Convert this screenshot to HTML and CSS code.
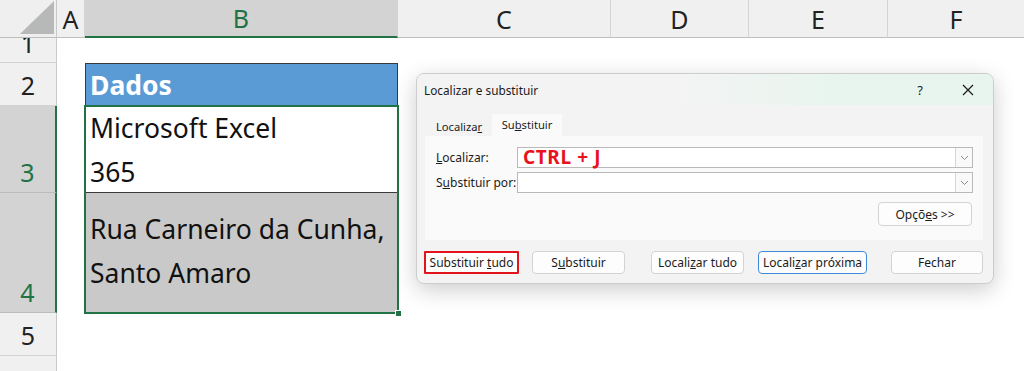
FILE: index.html
```html
<!DOCTYPE html>
<html lang="pt">
  <head>
    <meta charset="UTF-8" />
    <title>Localizar e substituir</title>
    <link rel="stylesheet" href="styles.css">
  </head>
  <body>
    <div class="sheet">
      <!-- header row -->
      <div class="corner">
        <svg width="57" height="38" viewBox="0 0 57 38"><polygon points="20,35 54,35 54,2" fill="#b7b9b9" /></svg>
      </div>
      <div class="colhead">A</div>
      <div class="colhead sel">B</div>
      <div class="colrest">
        <div class="colhead c">C</div>
        <div class="colhead d">D</div>
        <div class="colhead e">E</div>
        <div class="colhead f">F</div>
      </div>

      <!-- row 1 -->
      <div class="rowhead r1">1</div>
      <div></div><div></div><div></div>

      <!-- row 2 -->
      <div class="rowhead">2</div>
      <div></div>
      <div class="cell head">Dados</div>
      <div></div>

      <!-- row 3 -->
      <div class="rowhead sel">3</div>
      <div></div>
      <div class="cell">Microsoft Excel<br>365</div>
      <div></div>

      <!-- row 4 -->
      <div class="rowhead sel">4</div>
      <div></div>
      <div class="cell grey">Rua Carneiro da Cunha,<br>Santo Amaro</div>
      <div></div>

      <!-- row 5 -->
      <div class="rowhead">5</div>
      <div></div><div></div><div></div>

      <!-- row 6 -->
      <div class="rowhead r6">6</div>
      <div></div><div></div><div></div>
    </div>

    <div class="selection"><span class="handle"></span></div>

    <div class="dialog">
      <div class="titlebar">
        <span class="title">Localizar e substituir</span>
        <span class="help">?</span>
        <span class="close">
          <svg width="12" height="12" viewBox="0 0 12 12"><path d="M1 1 L11 11 M11 1 L1 11" stroke="#1a1a1a" stroke-width="1.2" /></svg>
        </span>
      </div>
      <div class="dbody">
        <div class="tabs">
          <div class="tab">Localiza<u>r</u></div>
          <div class="tab active">Su<u>b</u>stituir</div>
        </div>
        <div class="panel">
          <div class="field">
            <label><u>L</u>ocalizar:</label>
            <div class="combo">
              <span class="value">CTRL + J</span>
              <span class="drop"><svg width="9" height="6" viewBox="0 0 9 6"><path d="M1 1 L4.5 4.5 L8 1" fill="none" stroke="#8a8a8a" stroke-width="1" /></svg></span>
            </div>
          </div>
          <div class="field">
            <label>S<u>u</u>bstituir por:</label>
            <div class="combo">
              <span class="value"></span>
              <span class="drop"><svg width="9" height="6" viewBox="0 0 9 6"><path d="M1 1 L4.5 4.5 L8 1" fill="none" stroke="#8a8a8a" stroke-width="1" /></svg></span>
            </div>
          </div>
          <div class="options">
            <button class="btn opt">Opçõ<u>e</u>s &gt;&gt;</button>
          </div>
        </div>
        <div class="buttons">
          <div class="group">
            <button class="btn hl">Substituir <u>t</u>udo</button>
            <button class="btn">S<u>u</u>bstituir</button>
          </div>
          <div class="group">
            <button class="btn">Locali<u>z</u>ar tudo</button>
            <button class="btn wide focus">Locali<u>z</u>ar próxima</button>
          </div>
          <button class="btn">Fechar</button>
        </div>
      </div>
    </div>
  </body>
</html>
```

FILE: styles.css
```css
body {
  margin: 0;
  width: 1024px;
  height: 371px;
  overflow: hidden;
  position: relative;
  background: #fff;
  font-family: "Noto Sans", sans-serif;
}

.sheet {
  display: grid;
  grid-template-columns: 57px 28px 313px 1fr;
  grid-template-rows: 38px 25px 43px 87px 120px 43px 1fr;
  height: 371px;
}

/* headers */
.corner {
  background: #efefef;
  border-right: 1px solid #c9c9c9;
  border-bottom: 1px solid #bdbdbd;
  box-sizing: border-box;
}
.corner svg {
  display: block;
  margin-top: -1px;
}

.colhead {
  display: flex;
  align-items: center;
  justify-content: center;
  background: #f0f0f0;
  border-right: 1px solid #d4d4d4;
  border-bottom: 1px solid #bdbdbd;
  box-sizing: border-box;
  font-size: 25px;
  color: #222;
}
.colhead.sel {
  background: #d3d3d3;
  color: #217346;
  border-bottom: 2px solid #217346;
}
.colrest {
  display: flex;
}
.colhead.c { width: 213px; }
.colhead.d { width: 138px; }
.colhead.e { width: 139px; }
.colhead.f { flex: 1; border-right: none; }

.rowhead {
  display: flex;
  align-items: flex-end;
  justify-content: center;
  padding-bottom: 3px;
  background: #f0f0f0;
  border-right: 1px solid #c9c9c9;
  border-bottom: 1px solid #d4d4d4;
  box-sizing: border-box;
  overflow: hidden;
  font-size: 25px;
  line-height: 34px;
  color: #222;
}
.rowhead.r1 {
  padding-bottom: 2px;
}
.rowhead.r6 {
  align-items: flex-start;
  padding-top: 8px;
  border-bottom: none;
}
.rowhead.sel {
  background: #d3d3d3;
  color: #217346;
  border-right: 2px solid #217346;
  border-bottom-color: #bcbcbc;
}

/* cells */
.cell {
  padding-left: 4px;
  font-size: 26.5px;
  line-height: 44px;
  color: #111;
  white-space: nowrap;
  border-left: 1px solid #3a3a3a;
  border-right: 1px solid #3a3a3a;
  border-bottom: 1px solid #3a3a3a;
  box-sizing: border-box;
}
.cell.head {
  background: #5b9bd5;
  color: #fff;
  font-weight: 700;
  line-height: 42px;
  border-top: 1px solid #3a3a3a;
}
.cell.grey {
  background: #c9c9c9;
  padding-top: 14px;
}

.selection {
  position: absolute;
  left: 84px;
  top: 105px;
  width: 311px;
  height: 205px;
  border: 2px solid #217346;
}
.handle {
  position: absolute;
  right: -5px;
  bottom: -5px;
  width: 5px;
  height: 5px;
  background: #217346;
  border: 1px solid #fff;
}

/* dialog */
.dialog {
  position: absolute;
  left: 416px;
  top: 73px;
  width: 578px;
  height: 211px;
  box-sizing: border-box;
  background: #f3f3f3;
  border: 1px solid #cdcdcd;
  border-radius: 8px;
  box-shadow: 0 6px 22px rgba(0, 0, 0, 0.2);
  font-size: 12px;
  color: #1b1b1b;
  overflow: hidden;
}
.titlebar {
  display: flex;
  align-items: center;
  height: 31px;
  padding-left: 7px;
  background: linear-gradient(to right, #f3f3f3 45%, #e7f5ee 75%);
}
.title {
  flex: 1;
  font-size: 11.8px;
}
.help {
  width: 48px;
  text-align: center;
  font-size: 13px;
}
.close {
  width: 48px;
  display: flex;
  justify-content: center;
  margin-right: 1px;
}

.dbody {
  padding: 9px 10px 0 7px;
}
.tabs {
  display: flex;
  align-items: flex-end;
  gap: 2px;
  height: 22px;
  padding-left: 1px;
  font-size: 11.2px;
}
.tab {
  width: 65px;
  height: 18px;
  line-height: 17px;
  text-align: center;
  padding-left: 3px;
  box-sizing: border-box;
}
.tab.active {
  width: 70px;
  height: 22px;
  line-height: 22px;
  padding-left: 0;
  background: #fafafa;
}
.panel {
  height: 104px;
  box-sizing: border-box;
  margin-left: 1px;
  padding: 11px 10px 0 11px;
  background: #fafafa;
}
.field {
  display: flex;
  align-items: center;
  margin-bottom: 4px;
}
.field label {
  width: 81px;
}
.combo {
  flex: 1;
  display: flex;
  height: 21px;
  box-sizing: border-box;
  background: #fff;
  border: 1px solid #b9b9b9;
}
.value {
  flex: 1;
  padding-left: 5px;
  color: #e8121c;
  font-weight: 700;
  font-size: 19px;
  letter-spacing: 0.6px;
  line-height: 19px;
}
.drop {
  width: 16px;
  display: flex;
  align-items: center;
  justify-content: center;
  border-left: 1px solid #d6d6d6;
  background: #f9f9f9;
}

.options {
  display: flex;
  justify-content: flex-end;
  margin-top: 9px;
  padding-right: 1px;
}

.btn {
  height: 23px;
  width: 93px;
  padding: 0;
  box-sizing: border-box;
  background: #fdfdfd;
  border: 1px solid #d3d3d3;
  border-radius: 4px;
  font-family: "Noto Sans", sans-serif;
  font-size: 12px;
  color: #1b1b1b;
}
.btn.opt {
  width: 94px;
  height: 24px;
}
.btn.hl {
  width: 95px;
  border: 2px solid #e3121c;
  border-radius: 1px;
}
.btn.wide {
  width: 109px;
}
.btn.focus {
  border-color: #3d8ad6;
}

.buttons {
  display: flex;
  align-items: center;
  gap: 24px;
  margin-top: 11px;
}
.buttons .group + .group {
  margin-left: 2px;
}
.group {
  display: flex;
  gap: 13px;
}
.group + .group {
  gap: 14px;
}
```
